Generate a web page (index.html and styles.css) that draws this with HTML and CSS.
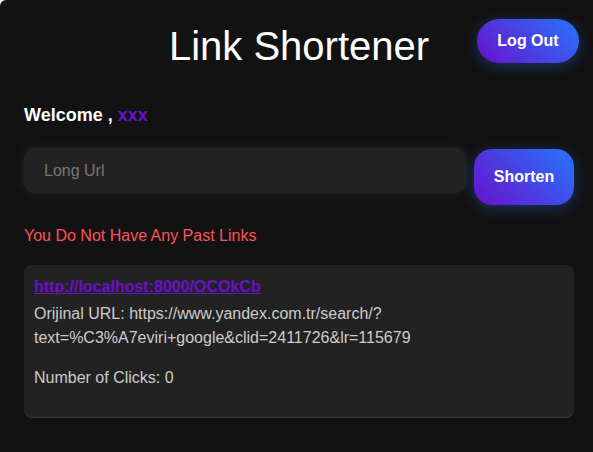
FILE: index.html
```html
<!DOCTYPE html>
<html lang="en">
<head>
<meta charset="utf-8">
<title>Link Shortener</title>
<link rel="stylesheet" href="styles.css">
</head>
<body>
<div class="app">
  <header class="header">
    <h1 class="title">Link Shortener</h1>
    <button class="btn btn-logout" type="button">Log Out</button>
  </header>
  <h3 class="welcome">Welcome , <span class="user">xxx</span></h3>
  <form class="shorten-row">
    <input class="url-input" type="text" placeholder="Long Url">
    <button class="btn btn-shorten" type="button">Shorten</button>
  </form>
  <p class="error">You Do Not Have Any Past Links</p>
  <div class="link-card">
    <a class="short-link" href="#">http://localhost:8000/OCOkCb</a>
    <p class="orig">Orijinal URL: https://www.yandex.com.tr/search/?<wbr>text=%C3%A7eviri+google&amp;clid=2411726&amp;lr=115679</p>
    <p class="clicks">Number of Clicks: 0</p>
  </div>
</div>
</body>
</html>
```

FILE: styles.css
```css
html, body {
  margin: 0;
  padding: 0;
  background: #ffffff;
  overflow: hidden;
}
body {
  font-family: "Liberation Sans", Arial, sans-serif;
}
.app {
  width: 598px;
  min-height: 100vh;
  box-sizing: border-box;
  padding: 20px 24px;
  background: #121212;
  border-radius: 6px 6px 0 0;
  color: #ffffff;
}
.header {
  position: relative;
}
.title {
  margin: 3px 0 0;
  font-size: 40px;
  line-height: 46px;
  font-weight: 400;
  text-align: center;
  color: #ffffff;
}
.btn {
  border: none;
  color: #ffffff;
  font-family: "Liberation Sans", Arial, sans-serif;
  font-size: 16px;
  font-weight: 700;
  background: linear-gradient(45deg, #6a11cb, #2575fc);
  box-shadow: 0 3px 14px rgba(37, 117, 252, 0.35);
  cursor: pointer;
}
.btn-logout {
  position: absolute;
  top: -4px;
  right: -5px;
  width: 102px;
  height: 44px;
  border-radius: 22px;
}
.welcome {
  margin: 36px 0 0;
  font-size: 18px;
  font-weight: 700;
}
.user {
  color: #6a11cb;
}
.shorten-row {
  display: flex;
  align-items: flex-start;
  gap: 8px;
  margin: 22px 0 0;
}
.url-input {
  flex: 1;
  height: 45px;
  box-sizing: border-box;
  border: none;
  outline: none;
  border-radius: 10px;
  padding: 0 20px;
  background: #222222;
  color: #dddddd;
  font-family: "Liberation Sans", Arial, sans-serif;
  font-size: 16px;
  box-shadow: 0 0 8px rgba(40, 40, 40, 0.9);
}
.url-input::placeholder {
  color: #777777;
}
.btn-shorten {
  width: 100px;
  height: 56px;
  border-radius: 18px;
  margin-top: 1px;
}
.error {
  margin: 22px 0 0;
  font-size: 16px;
  color: #ff5252;
}
.link-card {
  margin-top: 20px;
  background: #222222;
  border-radius: 8px;
  padding: 10px 10px 11px;
  border-bottom: 1px solid #3d3d3d;
}
.short-link {
  display: block;
  line-height: 24px;
  font-size: 16px;
  font-weight: 700;
  color: #6a11cb;
  text-decoration: underline;
}
.orig, .clicks {
  font-size: 16px;
  line-height: 24px;
  color: #cccccc;
}
.orig {
  margin: 3px 0 16px;
}
.clicks {
  margin: 0 0 16px;
}
```
